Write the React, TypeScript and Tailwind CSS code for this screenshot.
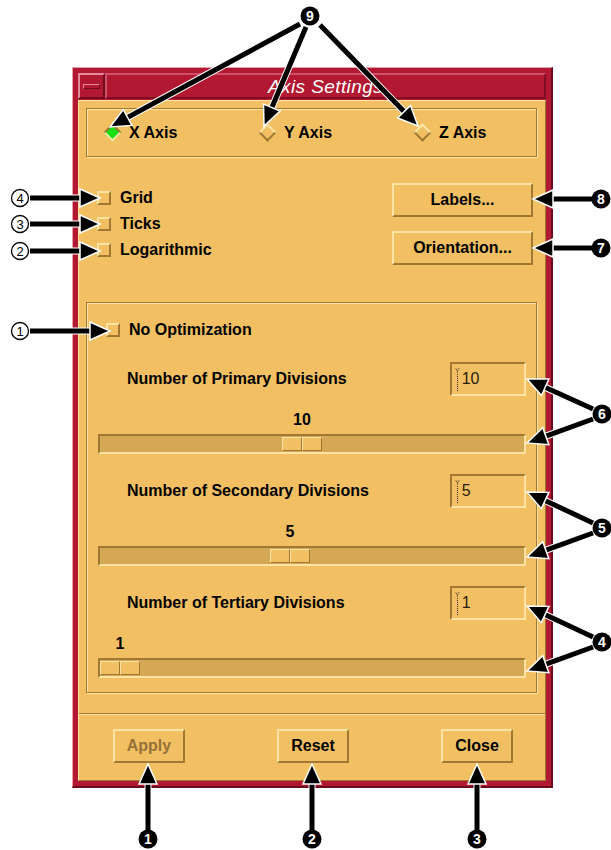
import React from 'react';

// Motif-ish bevels, written out in full so Tailwind picks them up
const raised =
  'border-2 border-t-[#fde3a6] border-l-[#fde3a6] border-b-[#a07834] border-r-[#a07834]';
const sunken =
  'border-2 border-t-[#a07834] border-l-[#a07834] border-b-[#fde3a6] border-r-[#fde3a6]';
const etched =
  'border border-t-[#a07834] border-l-[#a07834] border-b-[#a07834] border-r-[#a07834] shadow-[inset_1px_1px_0_#fde3a6,1px_1px_0_#fde3a6]';

function CheckBox() {
  return <div className={`w-[14px] h-[14px] shrink-0 bg-[#f2c062] ${raised}`} />;
}

function Diamond({ on }: { on?: boolean }) {
  return (
    <div className="w-[18px] h-[18px] shrink-0 flex items-center justify-center">
      {on ? (
        <div className={`w-[13px] h-[13px] rotate-45 bg-[#12e012] ${sunken}`} />
      ) : (
        <div className={`w-[13px] h-[13px] rotate-45 bg-[#f2c062] ${raised}`} />
      )}
    </div>
  );
}

function PushButton({ label, width, disabled }: { label: string; width: string; disabled?: boolean }) {
  return (
    <div
      className={`${width} h-[34px] shrink-0 flex items-center justify-center bg-[#f2c062] ${raised} text-[16px] font-bold leading-none ${
        disabled ? 'text-[#96713a]' : 'text-black'
      }`}
    >
      {label}
    </div>
  );
}

function Field({ value }: { value: string }) {
  return (
    <div className={`w-[76px] h-[34px] shrink-0 flex items-center bg-[#f2c062] ${sunken}`}>
      <div className="ml-[3px] flex flex-col items-center">
        <span className="block text-[7px] leading-none text-[#5a4420]">Y</span>
        <span className="block h-[17px] border-l border-dotted border-[#3a2a10]" />
      </div>
      <span className="ml-[2px] text-[16px] leading-none text-[#2a2010]">{value}</span>
    </div>
  );
}

function Thumb() {
  return (
    <div className="flex h-full">
      <div className="w-[20px] h-full bg-[#f2c062] border border-t-[#fde3a6] border-l-[#fde3a6] border-b-[#a07834] border-r-[#a07834]" />
      <div className="w-[20px] h-full bg-[#f2c062] border border-t-[#fde3a6] border-l-[#fde3a6] border-b-[#a07834] border-r-[#a07834]" />
    </div>
  );
}

function DivisionGroup({
  label,
  value,
  thumbOffset,
  first,
}: {
  label: string;
  value: string;
  thumbOffset: string;
  first?: boolean;
}) {
  return (
    <div className={first ? 'mt-[23px]' : 'mt-[20px]'}>
      <div className="h-[34px] flex items-center justify-between pl-[40px] pr-[10px]">
        <span className="text-[16px] font-bold leading-none whitespace-nowrap">{label}</span>
        <Field value={value} />
      </div>
      <div className="mt-[16px] h-[16px] pl-[13px] flex">
        <div className={`${thumbOffset} w-[40px] text-center text-[16px] font-bold leading-[16px]`}>
          {value}
        </div>
      </div>
      <div className={`mt-[6px] ml-[11px] mr-[10px] h-[20px] bg-[#d5a855] ${sunken}`}>
        <div className={`${thumbOffset} h-full py-px`}>
          <Thumb />
        </div>
      </div>
    </div>
  );
}

function Window() {
  return (
    <div className="w-[481px] bg-[#b21832] border-t border-l border-b-2 border-r-2 border-t-[#e8a0ac] border-l-[#e8a0ac] border-b-[#6c0a1e] border-r-[#6c0a1e] p-[5px]">
      {/* title bar */}
      <div className="flex h-[26px]">
        <div className="w-[27px] h-full flex items-center justify-center border-2 border-t-[#e58c9c] border-l-[#e58c9c] border-b-[#700c1e] border-r-[#700c1e]">
          <div className="w-[17px] h-[5px] border border-t-[#e58c9c] border-l-[#e58c9c] border-b-[#700c1e] border-r-[#700c1e]" />
        </div>
        <div className="flex-1 h-full flex items-center justify-center border-2 border-t-[#d0506a] border-l-[#d0506a] border-b-[#800e24] border-r-[#800e24]">
          <span className="text-white italic text-[19px] leading-none tracking-[0.4px]">Axis Settings</span>
        </div>
      </div>

      {/* body */}
      <div className="mt-px bg-[#f2c062] border border-t-[#fde3a6] border-l-[#fde3a6] border-b-[#a07834] border-r-[#a07834] text-black">
        <div className="pl-[7px] pr-[8px] pt-[7px] pb-[20px]">
          {/* axis radio box */}
          <div className={`h-[49px] flex items-center pl-[16px] ${etched}`}>
            {[
              { l: 'X Axis', on: true },
              { l: 'Y Axis', on: false },
              { l: 'Z Axis', on: false },
            ].map((r) => (
              <div key={r.l} className="w-[155px] shrink-0 flex items-center gap-[8px]">
                <Diamond on={r.on} />
                <span className="text-[16px] font-bold leading-none">{r.l}</span>
              </div>
            ))}
          </div>

          {/* toggles + dialogs */}
          <div className="h-[145px] flex justify-between">
            <div className="pt-[28px] pl-[11px]">
              {['Grid', 'Ticks', 'Logarithmic'].map((t) => (
                <div key={t} className="h-[26px] flex items-center gap-[9px]">
                  <CheckBox />
                  <span className="text-[16px] font-bold leading-none">{t}</span>
                </div>
              ))}
            </div>
            <div className="pt-[26px] pr-[4px] flex flex-col gap-[14px]">
              <PushButton label="Labels..." width="w-[141px]" />
              <PushButton label="Orientation..." width="w-[141px]" />
            </div>
          </div>

          {/* divisions */}
          <div className={`h-[391px] ${etched}`}>
            <div className="mt-[18px] h-[18px] pl-[19px] flex items-center gap-[9px]">
              <CheckBox />
              <span className="text-[16px] font-bold leading-none">No Optimization</span>
            </div>
            <DivisionGroup first label="Number of Primary Divisions" value="10" thumbOffset="ml-[182px]" />
            <DivisionGroup label="Number of Secondary Divisions" value="5" thumbOffset="ml-[170px]" />
            <DivisionGroup label="Number of Tertiary Divisions" value="1" thumbOffset="ml-0" />
          </div>
        </div>

        {/* separator + action buttons */}
        <div className="h-[2px] border-t border-b border-t-[#a07834] border-b-[#fde3a6]" />
        <div className="pt-[14px] pb-[17px] pl-[34px] flex gap-[92px]">
          <PushButton label="Apply" width="w-[72px]" disabled />
          <PushButton label="Reset" width="w-[72px]" />
          <PushButton label="Close" width="w-[72px]" />
        </div>
      </div>
    </div>
  );
}

function Arrow({ x1, y1, x2, y2 }: { x1: number; y1: number; x2: number; y2: number }) {
  const dx = x2 - x1;
  const dy = y2 - y1;
  const len = Math.hypot(dx, dy);
  const ux = dx / len;
  const uy = dy / len;
  const hl = 20;
  const hw = 9;
  const bx = x2 - ux * hl;
  const by = y2 - uy * hl;
  const px = -uy;
  const py = ux;
  const pts = `${x2},${y2} ${bx + px * hw},${by + py * hw} ${bx - px * hw},${by - py * hw}`;
  return (
    <g>
      <line x1={x1} y1={y1} x2={bx + ux * 2} y2={by + uy * 2} stroke="white" strokeWidth={7} />
      <line x1={x1} y1={y1} x2={bx + ux * 2} y2={by + uy * 2} stroke="black" strokeWidth={5} />
      <polygon points={pts} fill="black" stroke="white" strokeWidth={1.5} />
    </g>
  );
}

function Solid({ x, y, n }: { x: number; y: number; n: string }) {
  return (
    <g>
      <circle cx={x} cy={y} r={9.5} fill="black" />
      <text
        x={x}
        y={y + 5}
        textAnchor="middle"
        fontSize={14}
        fontWeight={700}
        fill="white"
        fontFamily="'Liberation Sans', Arial, sans-serif"
      >
        {n}
      </text>
    </g>
  );
}

function Outline({ x, y, n }: { x: number; y: number; n: string }) {
  return (
    <g>
      <circle cx={x} cy={y} r={8.5} fill="white" stroke="black" strokeWidth={1.3} />
      <text
        x={x}
        y={y + 5}
        textAnchor="middle"
        fontSize={13}
        fill="black"
        fontFamily="'Liberation Sans', Arial, sans-serif"
      >
        {n}
      </text>
    </g>
  );
}

function Annotations() {
  return (
    <svg className="absolute left-0 top-0 pointer-events-none" width={611} height={850}>
      {/* 9 -> axis radios */}
      <Arrow x1={300} y1={24} x2={110} y2={127} />
      <Arrow x1={306} y1={27} x2={264} y2={126} />
      <Arrow x1={320} y1={25} x2={418} y2={126} />
      <Solid x={310} y={16} n="9" />

      {/* left side */}
      <Arrow x1={30} y1={198} x2={100} y2={198} />
      <Arrow x1={30} y1={224} x2={100} y2={224} />
      <Arrow x1={30} y1={251} x2={100} y2={251} />
      <Arrow x1={30} y1={331} x2={110} y2={331} />
      <Outline x={20} y={198} n="4" />
      <Outline x={20} y={224} n="3" />
      <Outline x={20} y={251} n="2" />
      <Outline x={20} y={331} n="1" />

      {/* right side */}
      <Arrow x1={592} y1={199} x2={533} y2={199} />
      <Arrow x1={592} y1={248} x2={533} y2={248} />
      <Solid x={601} y={199} n="8" />
      <Solid x={601} y={248} n="7" />

      <Arrow x1={593} y1={409} x2={527} y2={379} />
      <Arrow x1={593} y1={419} x2={527} y2={443} />
      <Solid x={602} y={414} n="6" />

      <Arrow x1={593} y1={523} x2={527} y2={492} />
      <Arrow x1={593} y1={533} x2={527} y2={557} />
      <Solid x={602} y={528} n="5" />

      <Arrow x1={593} y1={637} x2={527} y2={606} />
      <Arrow x1={593} y1={647} x2={527} y2={671} />
      <Solid x={602} y={642} n="4" />

      {/* bottom */}
      <Arrow x1={148} y1={830} x2={148} y2={764} />
      <Arrow x1={312} y1={830} x2={312} y2={764} />
      <Arrow x1={477} y1={830} x2={477} y2={764} />
      <Solid x={148} y={839} n="1" />
      <Solid x={312} y={839} n="2" />
      <Solid x={477} y={839} n="3" />
    </svg>
  );
}

export default function App() {
  return (
    <div className="relative w-[611px] h-[850px] bg-white overflow-hidden font-['Liberation_Sans',Arial,sans-serif]">
      <div className="pt-[67px] pl-[72px]">
        <Window />
      </div>
      <Annotations />
    </div>
  );
}
